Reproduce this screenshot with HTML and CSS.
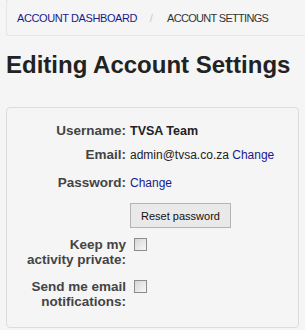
FILE: index.html
```html
<!DOCTYPE html>
<html>
<head>
    <title>Account Settings</title>
    <link rel="stylesheet" href="styles.css">
</head>
<body>
    <div class="breadcrumb">
        <a href="#">Account Dashboard</a>
        <span class="sep">/</span>
        <span class="current">Account Settings</span>
    </div>

    <h1>Editing Account Settings</h1>

    <div class="panel">
        <div class="form-row">
            <div class="label">Username:</div>
            <div class="value"><strong>TVSA Team</strong></div>
        </div>
        <div class="form-row row-email">
            <div class="label">Email:</div>
            <div class="value">admin@tvsa.co.za <a href="#">Change</a></div>
        </div>
        <div class="form-row row-password">
            <div class="label">Password:</div>
            <div class="value"><a href="#">Change</a></div>
        </div>
        <div class="form-row row-button">
            <div class="label"></div>
            <div class="value"><button class="btn">Reset password</button></div>
        </div>
        <div class="form-row row-check">
            <div class="label">Keep my activity private:</div>
            <div class="value"><input type="checkbox"></div>
        </div>
        <div class="form-row row-check">
            <div class="label">Send me email notifications:</div>
            <div class="value"><input type="checkbox"></div>
        </div>
    </div>
</body>
</html>
```

FILE: styles.css
```css
body {
    margin: 0;
    padding: 0 6px;
    background-color: #f5f5f5;
    font-family: "Liberation Sans", Arial, sans-serif;
    color: #222;
}

a {
    color: #1a1a8c;
    text-decoration: none;
}

.breadcrumb {
    margin-top: -1px;
    margin-right: -6px;
    padding: 9px 10px 8px;
    line-height: 18px;
    font-size: 11px;
    letter-spacing: -0.4px;
    white-space: nowrap;
    text-transform: uppercase;
    border: 1px solid #e6e6e6;
    border-right: 0;
    border-radius: 3px 0 0 3px;
    background-color: #f5f5f5;
}

.breadcrumb .sep {
    color: #c8c8c8;
    padding: 0 12px 0 10px;
}

.breadcrumb .current {
    color: #333;
    letter-spacing: -0.7px;
}

h1 {
    margin: 15px 0 28px;
    font-size: 24px;
    line-height: 28px;
    font-weight: bold;
    color: #222;
}

.panel {
    border: 1px solid #dcdcdc;
    border-radius: 4px;
    padding: 15px 10px 18px 18px;
}

.form-row {
    display: grid;
    grid-template-columns: 101px 1fr;
    column-gap: 4px;
    line-height: 16px;
    margin-bottom: 8px;
}

.form-row .label {
    text-align: right;
    font-size: 13.5px;
    font-weight: bold;
    color: #444;
}

.form-row .value {
    font-size: 12px;
    color: #222;
}

.form-row .value strong {
    font-size: 12.5px;
}

.row-password {
    margin-top: 12px;
    margin-bottom: 12px;
}

.btn {
    font-family: "Liberation Sans", Arial, sans-serif;
    font-size: 11px;
    color: #111;
    width: 101px;
    height: 25px;
    background-color: #e9e9e9;
    border: 1px solid #b4b4b4;
    border-radius: 0;
    padding: 0;
}

.row-button {
    margin-bottom: 9px;
}

.row-check {
    margin-bottom: 12px;
}

.row-check:last-child {
    margin-bottom: 0;
}

.row-check .label {
    line-height: 15px;
}

.row-check input {
    appearance: none;
    width: 13px;
    height: 13px;
    margin: 1px 0 0 4px;
    border: 1px solid #8c8c8c;
    background: linear-gradient(135deg, #d6d6d6, #f8f8f8);
}
```
